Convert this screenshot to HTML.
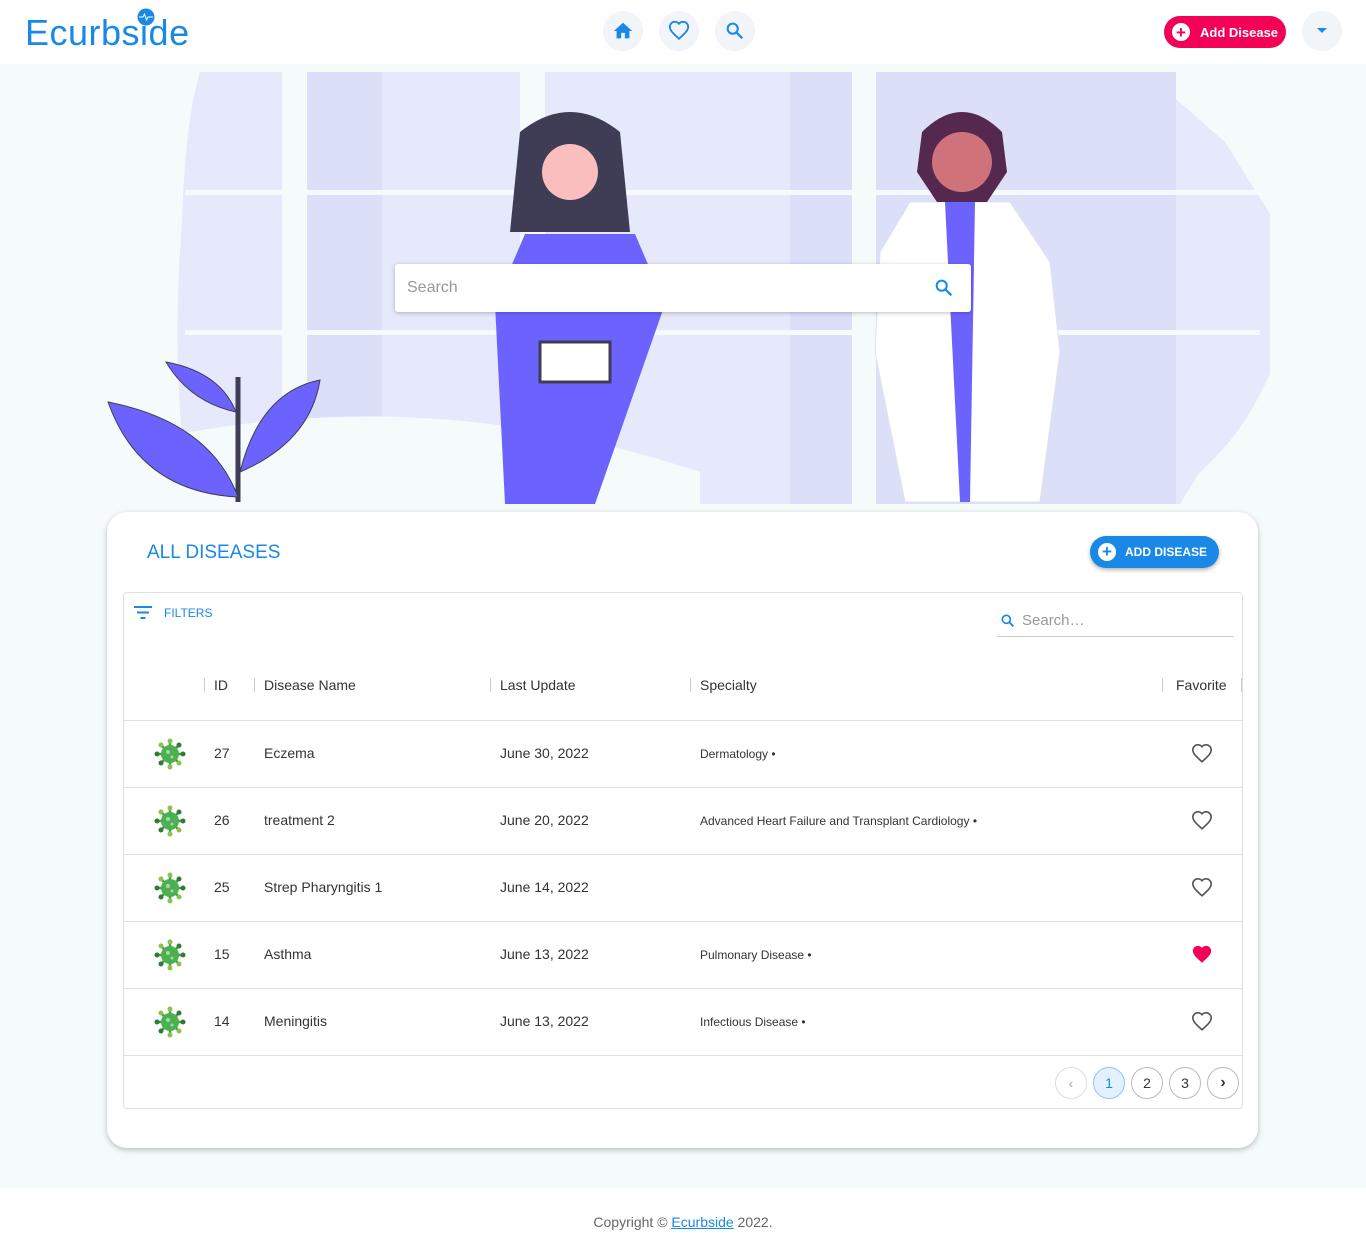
<!DOCTYPE html>
<html><head><meta charset="utf-8"><style>
*{box-sizing:border-box;margin:0;padding:0}
body{width:1366px;height:1257px;background:#f5fbfb;font-family:"Liberation Sans",sans-serif;position:relative;overflow:hidden;color:#333}
.hdr{position:absolute;left:0;top:0;width:1366px;height:64px;background:#fff}
.logo{position:absolute;left:25px;top:12px;font-size:36px;color:#1a88e6;letter-spacing:0.5px}
.nb{position:absolute;top:11px;width:40px;height:40px;border-radius:50%;background:#f1f4f8;display:flex;align-items:center;justify-content:center}
.add{position:absolute;left:1164px;top:16px;width:122px;height:32px;border-radius:16px;background:#f50057;color:#fff;font-weight:bold;font-size:13px;display:flex;align-items:center;padding-left:8px}
.add i{width:18px;height:18px;border-radius:50%;background:#fff;color:#f50057;display:inline-flex;align-items:center;justify-content:center;font-style:normal;font-size:17px;margin-right:10px;line-height:1}
.card{position:absolute;left:107px;top:512px;width:1151px;height:636px;background:#fff;border-radius:20px;box-shadow:0 2px 6px rgba(0,0,0,.25)}
.tbl{position:absolute;left:123px;top:592px;width:1120px;height:517px;border:1px solid #e0e0e0;border-radius:4px}
.t{position:absolute;font-size:14px;color:#333}
.hline{position:absolute;left:0;width:1118px;height:1px;background:#e0e0e0}
.sep{position:absolute;top:85px;width:1px;height:14px;background:#ccc}
.pg{position:absolute;top:474px;width:32px;height:32px;border-radius:50%;border:1px solid #bbb;display:flex;align-items:center;justify-content:center;font-size:14px}
.row{position:absolute;left:0;width:1118px;height:67px;border-bottom:1px solid #e0e0e0}
.row .t{top:24px}
.row .sm{top:26px;font-size:12px}
.vir{position:absolute;left:30px;top:17px}
.fav{position:absolute;left:1067px;top:22px}
footer{position:absolute;left:0;top:1188px;width:1366px;height:69px;background:#fff;text-align:center;font-size:14px;color:#666;padding-top:26px}
footer a{color:#1a88e6;text-decoration:underline}
</style></head><body>
<div class="hdr">
<div class="logo">Ecurbside</div>
<svg style="position:absolute;left:136px;top:8px" width="22" height="18"><circle cx="10" cy="9" r="8.5" fill="#1a88e6"/><path d="M3 9h4l1.5-3 2 6 1.5-3h5" stroke="#fff" stroke-width="1" fill="none"/></svg>
<div class="nb" style="left:603px"><svg width="22" height="22" viewBox="0 0 24 24"><path d="M10 20v-6h4v6h5v-8h3L12 3 2 12h3v8z" fill="#1a88e6"/></svg></div>
<div class="nb" style="left:659px"><svg width="22" height="22" viewBox="0 0 24 24"><path d="M12 20.5l-1.4-1.3C5.4 14.4 2 11.3 2 7.5 2 4.4 4.4 2 7.5 2c1.7 0 3.4.8 4.5 2.1C13.1 2.8 14.8 2 16.5 2 19.6 2 22 4.4 22 7.5c0 3.8-3.4 6.9-8.6 11.7z" fill="none" stroke="#1a88e6" stroke-width="2"/></svg></div>
<div class="nb" style="left:715px"><svg width="22" height="22" viewBox="0 0 24 24"><circle cx="9.5" cy="9.5" r="5.5" fill="none" stroke="#1a88e6" stroke-width="2.2"/><path d="M14 14l6 6" stroke="#1a88e6" stroke-width="2.4"/></svg></div>
<div class="add"><i>+</i>Add Disease</div>
<div class="nb" style="left:1302px"><svg width="12" height="8"><path d="M1 1h10L6 6z" fill="#1a88e6"/></svg></div>
</div>
<svg style="position:absolute;left:100px;top:72px" width="1170" height="432">
<path d="M100 0H1045l80 70 75 120Q1180 330 1100 400L1080 432H90Q70 300 82 150Q85 50 100 0z" fill="#e6e9fb"/>
<rect x="207" y="0" width="75" height="432" fill="#dcdff8"/>
<rect x="690" y="0" width="62" height="432" fill="#dcdff8"/>
<rect x="776" y="0" width="300" height="432" fill="#dcdff8"/>
<rect x="182" y="0" width="25" height="432" fill="#f5fbfb"/>
<rect x="420" y="0" width="25" height="432" fill="#f5fbfb"/>
<rect x="752" y="0" width="24" height="432" fill="#f5fbfb"/>
<rect x="85" y="118" width="1075" height="5" fill="#f5fbfb"/>
<rect x="85" y="258" width="1075" height="5" fill="#f5fbfb"/>
<path d="M0 380Q300 300 600 400L600 432H0z" fill="#f5fbfb"/>
<path d="M495 432H405l-10-200 30-70h110l30 70z" fill="#6c63ff"/>
<path d="M420 60q50-40 100 0l10 100h-120z" fill="#3f3d56"/>
<circle cx="470" cy="100" r="28" fill="#fbbebe"/>
<rect x="440" y="270" width="70" height="40" fill="#fff" stroke="#3f3d56" stroke-width="3"/>
<path d="M780 180l30-50h100l40 60 10 90-20 150H805l-30-150z" fill="#fff" stroke="#e0e0f0"/>
<path d="M845 130h30l-5 300h-10z" fill="#6c63ff"/>
<path d="M822 60q40-40 80 0l5 40-20 30h-50l-20-30z" fill="#55284f"/>
<circle cx="862" cy="90" r="30" fill="#d0727a"/>
<path d="M138 430V305" stroke="#3f3d56" stroke-width="5"/>
<path d="M138 425Q40 420 8 330Q110 350 138 425z" fill="#6c63ff" stroke="#3f3d56"/>
<path d="M140 400Q160 320 220 308Q210 370 140 400z" fill="#6c63ff" stroke="#3f3d56"/>
<path d="M136 340Q90 330 66 290Q120 300 136 340z" fill="#6c63ff" stroke="#3f3d56"/>
</svg>
<div style="position:absolute;left:395px;top:264px;width:576px;height:48px;background:#fff;box-shadow:0 1px 4px rgba(0,0,0,.25);border-radius:3px">
<span style="position:absolute;left:12px;top:15px;font-size:16px;color:#999">Search</span>
<svg style="position:absolute;left:538px;top:13px" width="22" height="22" viewBox="0 0 24 24"><circle cx="9.5" cy="9.5" r="5.5" fill="none" stroke="#1a88e6" stroke-width="2.2"/><path d="M14 14l6 6" stroke="#1a88e6" stroke-width="2.4"/></svg>
</div>
<div class="card">
<div style="position:absolute;left:40px;top:30px;font-size:19px;color:#1a88e6">ALL DISEASES</div>
<div style="position:absolute;left:983px;top:24px;width:129px;height:32px;border-radius:16px;background:#1a88e6;color:#fff;font-weight:bold;font-size:12px;display:flex;align-items:center;padding-left:8px;box-shadow:0 2px 4px rgba(0,0,0,.3)"><span style="width:18px;height:18px;border-radius:50%;background:#fff;color:#1a88e6;display:inline-flex;align-items:center;justify-content:center;font-size:17px;margin-right:9px">+</span>ADD DISEASE</div>
</div>
<svg width="0" height="0" style="position:absolute"><defs>
<g id="v"><g stroke="#3e9e44" stroke-width="2.5"><path d="M16 3v26M3 16h26M7 7l18 18M25 7L7 25"/></g><circle cx="16" cy="16" r="9" fill="#4caf50"/><circle cx="16" cy="3" r="2.5" fill="#8bc34a"/><circle cx="16" cy="29" r="2.5" fill="#8bc34a"/><circle cx="3" cy="16" r="2.5" fill="#2e7d32"/><circle cx="29" cy="16" r="2.5" fill="#2e7d32"/><circle cx="7" cy="7" r="2.5" fill="#8bc34a"/><circle cx="25" cy="25" r="2.5" fill="#8bc34a"/><circle cx="25" cy="7" r="2.5" fill="#2e7d32"/><circle cx="7" cy="25" r="2.5" fill="#2e7d32"/><circle cx="14" cy="14" r="2" fill="#a5d6a7"/><circle cx="18" cy="19" r="1.5" fill="#a5d6a7"/></g>
<path id="h" d="M12 20.5l-1.4-1.3C5.4 14.4 2 11.3 2 7.5 2 4.4 4.4 2 7.5 2c1.7 0 3.4.8 4.5 2.1C13.1 2.8 14.8 2 16.5 2 19.6 2 22 4.4 22 7.5c0 3.8-3.4 6.9-8.6 11.7z"/>
</defs></svg>
<div class="tbl">
<svg style="position:absolute;left:10px;top:13px" width="18" height="14"><path d="M0 1h18M3 6.5h12M6.5 12h5" stroke="#1a88e6" stroke-width="2"/></svg>
<div class="t" style="left:40px;top:13px;font-size:12px;color:#1a88e6">FILTERS</div>
<svg style="position:absolute;left:876px;top:20px" width="16" height="16" viewBox="0 0 24 24"><circle cx="9.5" cy="9.5" r="6" fill="none" stroke="#1a88e6" stroke-width="2.5"/><path d="M14 14l6 6" stroke="#1a88e6" stroke-width="2.8"/></svg>
<div class="t" style="left:898px;top:19px;font-size:15px;color:#999">Search…</div>
<div style="position:absolute;left:873px;top:43px;width:237px;height:1px;background:#ccc"></div>
<div class="sep" style="left:80px"></div><div class="sep" style="left:130px"></div><div class="sep" style="left:366px"></div><div class="sep" style="left:566px"></div><div class="sep" style="left:1038px"></div><div class="sep" style="left:1117px"></div>
<div class="t" style="left:90px;top:84px">ID</div><div class="t" style="left:140px;top:84px">Disease Name</div><div class="t" style="left:376px;top:84px">Last Update</div><div class="t" style="left:576px;top:84px">Specialty</div><div class="t" style="left:1052px;top:84px">Favorite</div>
<div class="hline" style="top:127px"></div>
<div class="row" style="top:128px"><svg class="vir" width="32" height="32"><use href="#v"/></svg><div class="t" style="left:90px">27</div><div class="t" style="left:140px">Eczema</div><div class="t" style="left:376px">June 30, 2022</div><div class="t sm" style="left:576px">Dermatology •</div><svg class="fav" width="22" height="22" viewBox="0 0 24 24"><use href="#h" fill="none" stroke="#555" stroke-width="1.8"/></svg></div>
<div class="row" style="top:195px"><svg class="vir" width="32" height="32"><use href="#v"/></svg><div class="t" style="left:90px">26</div><div class="t" style="left:140px">treatment 2</div><div class="t" style="left:376px">June 20, 2022</div><div class="t sm" style="left:576px">Advanced Heart Failure and Transplant Cardiology •</div><svg class="fav" width="22" height="22" viewBox="0 0 24 24"><use href="#h" fill="none" stroke="#555" stroke-width="1.8"/></svg></div>
<div class="row" style="top:262px"><svg class="vir" width="32" height="32"><use href="#v"/></svg><div class="t" style="left:90px">25</div><div class="t" style="left:140px">Strep Pharyngitis 1</div><div class="t" style="left:376px">June 14, 2022</div><svg class="fav" width="22" height="22" viewBox="0 0 24 24"><use href="#h" fill="none" stroke="#555" stroke-width="1.8"/></svg></div>
<div class="row" style="top:329px"><svg class="vir" width="32" height="32"><use href="#v"/></svg><div class="t" style="left:90px">15</div><div class="t" style="left:140px">Asthma</div><div class="t" style="left:376px">June 13, 2022</div><div class="t sm" style="left:576px">Pulmonary Disease •</div><svg class="fav" width="22" height="22" viewBox="0 0 24 24"><use href="#h" fill="#f50057"/></svg></div>
<div class="row" style="top:396px"><svg class="vir" width="32" height="32"><use href="#v"/></svg><div class="t" style="left:90px">14</div><div class="t" style="left:140px">Meningitis</div><div class="t" style="left:376px">June 13, 2022</div><div class="t sm" style="left:576px">Infectious Disease •</div><svg class="fav" width="22" height="22" viewBox="0 0 24 24"><use href="#h" fill="none" stroke="#555" stroke-width="1.8"/></svg></div>
<div class="pg" style="left:931px;border-color:#ddd;color:#aaa">‹</div>
<div class="pg" style="left:969px;background:#e3f0fd;border-color:#90c4f5;color:#1a88e6">1</div>
<div class="pg" style="left:1007px">2</div>
<div class="pg" style="left:1045px">3</div>
<div class="pg" style="left:1083px;font-weight:bold;font-size:16px">›</div>
</div>
<footer>Copyright © <a>Ecurbside</a> 2022.</footer>
</body></html>
